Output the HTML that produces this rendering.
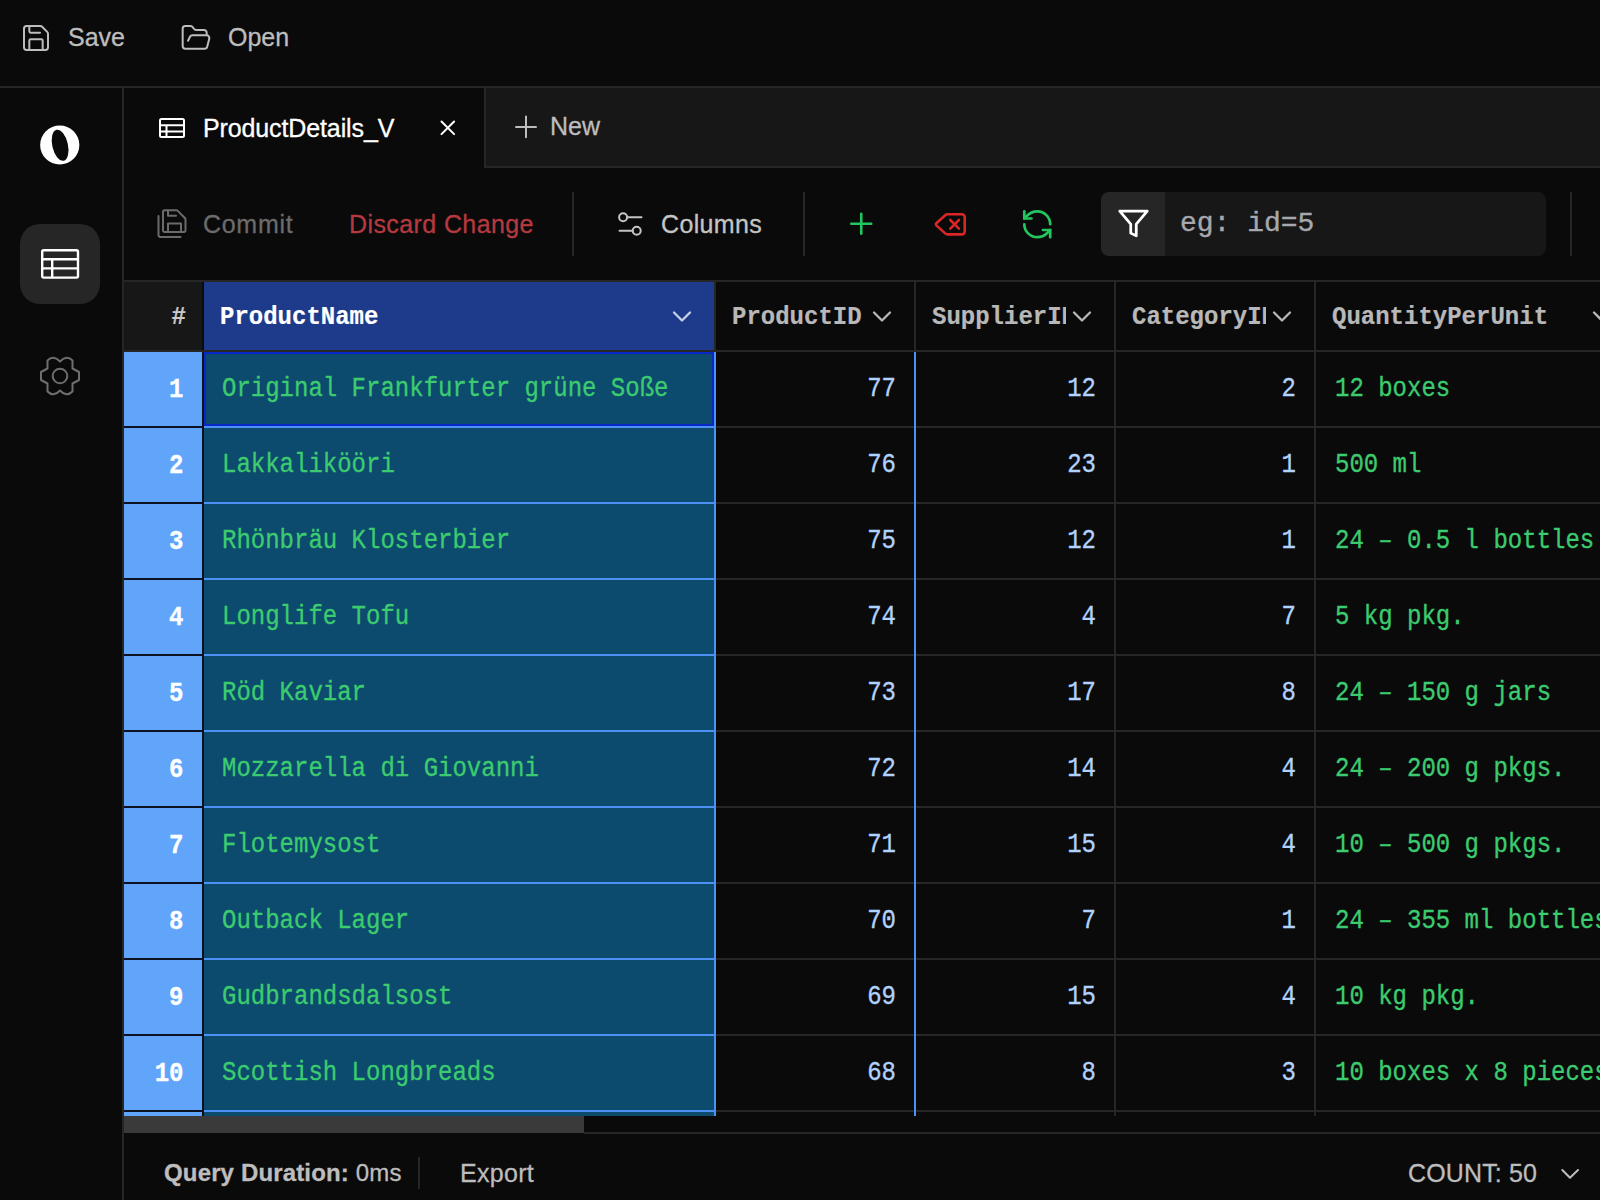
<!DOCTYPE html>
<html><head><meta charset="utf-8"><title>ProductDetails</title><style>
*{margin:0;padding:0;box-sizing:border-box}
html,body{width:1600px;height:1200px;overflow:hidden;background:#0a0a0a}
body{position:relative;font-family:"Liberation Sans",sans-serif;color:#bdbdbd}
.a{position:absolute}
.t{position:absolute;white-space:nowrap;font-size:25px;line-height:30px;height:30px;-webkit-text-stroke:0.3px currentColor}
.m{font-size:24px}
.sy{transform:scaleY(1.15);transform-origin:0 21.4px;-webkit-text-stroke:0.3px currentColor}
.sh{transform:scaleY(1.07);transform-origin:0 21.4px;-webkit-text-stroke:0.2px currentColor}
.m{font-family:"Liberation Mono",monospace}
svg{position:absolute;overflow:visible}
.hl{position:absolute;background:#262626}
</style></head><body>
<div class="hl" style="left:0;top:86px;width:1600px;height:2px"></div>
<svg style="left:20px;top:22px" width="32" height="32" viewBox="0 0 24 24" fill="none" stroke="#bdbdbd" stroke-width="1.5" stroke-linecap="round" stroke-linejoin="round"><path d="M15.2 3a2 2 0 0 1 1.4.6l3.8 3.8a2 2 0 0 1 .6 1.4V19a2 2 0 0 1-2 2H5a2 2 0 0 1-2-2V5a2 2 0 0 1 2-2z"/><path d="M17 21v-7a1 1 0 0 0-1-1H8a1 1 0 0 0-1 1v7"/><path d="M7 3v4a1 1 0 0 0 1 1h7"/></svg>
<div class="t" style="left:68px;top:22.3px;color:#bdbdbd">Save</div>
<svg style="left:179.7px;top:21.9px" width="32" height="32" viewBox="0 0 24 24" fill="none" stroke="#bdbdbd" stroke-width="1.5" stroke-linecap="round" stroke-linejoin="round"><path d="m6 14 1.5-2.9A2 2 0 0 1 9.24 10H20a2 2 0 0 1 1.94 2.5l-1.54 6a2 2 0 0 1-1.95 1.5H4a2 2 0 0 1-2-2V5a2 2 0 0 1 2-2h3.9a2 2 0 0 1 1.69.9l.81 1.2a2 2 0 0 0 1.67.9H18a2 2 0 0 1 2 2v2"/></svg>
<div class="t" style="left:228px;top:22.3px;color:#bdbdbd">Open</div>
<div class="hl" style="left:122px;top:88px;width:2px;height:1112px"></div>
<svg style="left:0;top:0" width="1" height="1"><circle cx="59.75" cy="145" r="19.6" fill="#fff"/><ellipse cx="60.1" cy="145.25" rx="7.8" ry="15.9" transform="rotate(-13 60.1 145.25)" fill="#0a0a0a"/></svg>
<div class="a" style="left:20px;top:224px;width:80px;height:80px;border-radius:20px;background:#262626"></div>
<svg style="left:0;top:0" width="1" height="1" fill="none" stroke="#fff" stroke-width="2.4"><rect x="42.2" y="250.2" width="35.8" height="27.4" rx="1.5"/><path d="M42.2 259.3H78M42.2 268.4H78M52.2 259.3V277.6"/></svg>
<svg style="left:0;top:0" width="1" height="1" fill="none" stroke="#6e6e6e" stroke-width="2" stroke-linejoin="round"><path d="M60 361.5Q53.5 354.5 47.5 360.5L47.5 368.5L41 372L41 380L47.5 383.5L47.5 391.5Q53.5 397.5 60 390.5Q66.5 397.5 72.5 391.5L72.5 383.5L79 380L79 372L72.5 368.5L72.5 360.5Q66.5 354.5 60 361.5Z"/><circle cx="60" cy="376" r="7.3"/></svg>
<div class="a" style="left:486px;top:88px;width:1114px;height:78px;background:#171717"></div>
<div class="hl" style="left:484px;top:88px;width:2px;height:80px"></div>
<div class="hl" style="left:486px;top:166px;width:1114px;height:2px"></div>
<svg style="left:0;top:0" width="1" height="1" fill="none" stroke="#fff" stroke-width="2"><rect x="160" y="119" width="24" height="18" rx="1.5"/><path d="M160 125.2H184M160 131.4H184M166.5 125.2V137"/></svg>
<div class="t" style="left:203px;top:112.5px;color:#fff;letter-spacing:-0.12px">ProductDetails_V</div>
<svg style="left:0;top:0" width="1" height="1" fill="none" stroke="#fff" stroke-width="2" stroke-linecap="round"><path d="M441.5 121.5l12.6 12.6M454.1 121.5l-12.6 12.6"/></svg>
<svg style="left:0;top:0" width="1" height="1" fill="none" stroke="#bdbdbd" stroke-width="2" stroke-linecap="round"><path d="M516 126.9h20M526 116.6v20.6"/></svg>
<div class="t" style="left:550px;top:111.3px;color:#bdbdbd">New</div>
<svg style="left:0;top:0" width="1" height="1" fill="none" stroke="#6b6b6b" stroke-width="2" stroke-linecap="round" stroke-linejoin="round"><path d="M176.5 210.2a1.5 1.5 0 0 1 1 .4l7.6 7.6a1.5 1.5 0 0 1 .4 1v11.2a1.5 1.5 0 0 1-1.5 1.5h-19.5a1.5 1.5 0 0 1-1.5-1.5v-18.7a1.5 1.5 0 0 1 1.5-1.5z"/><path d="M168 231.6v-8h13v8"/><path d="M168 210.5v5.3h8"/><path d="M158.5 216v19a2 2 0 0 0 2 2h20"/></svg>
<div class="t" style="left:203px;top:208.8px;color:#6b6b6b;letter-spacing:0.7px">Commit</div>
<div class="t" style="left:349px;top:208.8px;color:#b5393f;letter-spacing:0.4px">Discard Change</div>
<div class="hl" style="left:572px;top:192px;width:2px;height:64px"></div>
<svg style="left:0;top:0" width="1" height="1" fill="none" stroke="#c4c4c4" stroke-width="2" stroke-linecap="round"><circle cx="623.1" cy="217.3" r="4"/><path d="M627.1 217.3H641.5"/><circle cx="636.7" cy="230.8" r="4"/><path d="M619.5 230.8H632.7"/></svg>
<div class="t" style="left:661px;top:208.8px;color:#c4c4c4;letter-spacing:0.35px">Columns</div>
<div class="hl" style="left:803px;top:192px;width:2px;height:64px"></div>
<svg style="left:0;top:0" width="1" height="1" fill="none" stroke="#22c55e" stroke-width="2.6" stroke-linecap="round"><path d="M851.3 223.8H871.2M861.25 213.8V233.7"/></svg>
<svg style="left:932.5px;top:206.6px" width="34.6" height="34.6" viewBox="0 0 24 24" fill="none" stroke="#dc2626" stroke-width="1.8" stroke-linecap="round" stroke-linejoin="round"><path d="M10 5a2 2 0 0 0-1.344.519l-6.328 5.74a1 1 0 0 0 0 1.481l6.328 5.74A2 2 0 0 0 10 19h10a2 2 0 0 0 2-2V7a2 2 0 0 0-2-2z"/><path d="m12 9 6 6"/><path d="m18 9-6 6"/></svg>
<svg style="left:1019.5px;top:206.5px" width="34.5" height="34.5" viewBox="0 0 24 24" fill="none" stroke="#22c55e" stroke-width="1.9" stroke-linecap="round" stroke-linejoin="round"><path d="M21 12a9 9 0 0 0-9-9 9.75 9.75 0 0 0-6.74 2.74L3 8"/><path d="M3 3v5h5"/><path d="M3 12a9 9 0 0 0 9 9 9.75 9.75 0 0 0 6.74-2.74L21 16"/><path d="M16 16h5v5"/></svg>
<div class="a" style="left:1101px;top:192px;width:445px;height:64px;border-radius:8px;background:#171717;overflow:hidden"><div class="a" style="left:0;top:0;width:64px;height:64px;background:#262626"></div></div>
<svg style="left:1116.7px;top:207.35px" width="33" height="33" viewBox="0 0 24 24" fill="none" stroke="#fff" stroke-width="2" stroke-linecap="round" stroke-linejoin="round"><polygon points="22 3 2 3 10 12.46 10 19 14 21 14 12.46 22 3"/></svg>
<div class="t m" style="left:1180px;top:209px;font-size:28px;line-height:30px;color:#a6a8ad;-webkit-text-stroke:0.35px currentColor">eg: id=5</div>
<div class="hl" style="left:1570px;top:192px;width:2px;height:64px"></div>
<div class="hl" style="left:124px;top:280px;width:1476px;height:2px"></div>
<div class="a" style="left:124px;top:282px;width:78px;height:68px;background:#171717"></div>
<div class="t m sh" style="left:124px;top:302.5px;width:62px;text-align:right;font-weight:bold;color:#c8c8c8">#</div>
<div class="a" style="left:204px;top:282px;width:510px;height:68px;background:#1e3a8a"></div>
<div class="t m sh" style="left:220px;top:302.5px;font-weight:bold;color:#fff">ProductName</div>
<svg style="left:0;top:0" width="1" height="1" fill="none" stroke="#c8d0e8" stroke-width="2.3" stroke-linecap="round" stroke-linejoin="round"><path d="M674 312.5l8 8 8-8"/></svg>
<div class="t m sh" style="left:732px;top:302.5px;width:133.5px;overflow:hidden;font-weight:bold;color:#b8b8b8">ProductID</div>
<svg style="left:0;top:0" width="1" height="1" fill="none" stroke="#b8b8b8" stroke-width="2.3" stroke-linecap="round" stroke-linejoin="round"><path d="M874 312.5l8 8 8-8"/></svg>
<div class="t m sh" style="left:932px;top:302.5px;width:133.5px;overflow:hidden;font-weight:bold;color:#b8b8b8">SupplierID</div>
<svg style="left:0;top:0" width="1" height="1" fill="none" stroke="#b8b8b8" stroke-width="2.3" stroke-linecap="round" stroke-linejoin="round"><path d="M1074 312.5l8 8 8-8"/></svg>
<div class="t m sh" style="left:1132px;top:302.5px;width:133.5px;overflow:hidden;font-weight:bold;color:#b8b8b8">CategoryID</div>
<svg style="left:0;top:0" width="1" height="1" fill="none" stroke="#b8b8b8" stroke-width="2.3" stroke-linecap="round" stroke-linejoin="round"><path d="M1274 312.5l8 8 8-8"/></svg>
<div class="t m sh" style="left:1332px;top:302.5px;width:253.5px;overflow:hidden;font-weight:bold;color:#b8b8b8">QuantityPerUnit</div>
<svg style="left:0;top:0" width="1" height="1" fill="none" stroke="#b8b8b8" stroke-width="2.3" stroke-linecap="round" stroke-linejoin="round"><path d="M1594 312.5l8 8 8-8"/></svg>
<div class="hl" style="left:124px;top:350px;width:1476px;height:2px"></div>
<div class="hl" style="left:714px;top:282px;width:2px;height:68px"></div>
<div class="hl" style="left:914px;top:282px;width:2px;height:68px"></div>
<div class="hl" style="left:1114px;top:282px;width:2px;height:68px"></div>
<div class="hl" style="left:1314px;top:282px;width:2px;height:68px"></div>
<div class="a" style="left:124px;top:352px;width:78px;height:74px;background:#60a5fa"></div>
<div class="a" style="left:124px;top:426px;width:78px;height:2px;background:#0b1220"></div>
<div class="a" style="left:202px;top:352px;width:2px;height:76px;background:#0b1220"></div>
<div class="a" style="left:204px;top:352px;width:510px;height:74px;background:#0c4a6e"></div>
<div class="a" style="left:204px;top:426px;width:512px;height:2px;background:#4d90f6"></div>
<div class="hl" style="left:716px;top:426px;width:884px;height:2px"></div>
<div class="t m sy" style="left:222px;top:375px;color:#3ccb6e">Original Frankfurter grüne Soße</div>
<div class="t m sy" style="left:124px;top:376px;width:59.5px;text-align:right;font-weight:bold;color:#fff">1</div>
<div class="t m sy" style="left:716px;top:375px;width:180px;text-align:right;color:#b0d2fc">77</div>
<div class="t m sy" style="left:916px;top:375px;width:180px;text-align:right;color:#b0d2fc">12</div>
<div class="t m sy" style="left:1116px;top:375px;width:180px;text-align:right;color:#b0d2fc">2</div>
<div class="t m sy" style="left:1335px;top:375px;color:#3ccb6e">12 boxes</div>
<div class="a" style="left:124px;top:428px;width:78px;height:74px;background:#60a5fa"></div>
<div class="a" style="left:124px;top:502px;width:78px;height:2px;background:#0b1220"></div>
<div class="a" style="left:202px;top:428px;width:2px;height:76px;background:#0b1220"></div>
<div class="a" style="left:204px;top:428px;width:510px;height:74px;background:#0c4a6e"></div>
<div class="a" style="left:204px;top:502px;width:512px;height:2px;background:#4d90f6"></div>
<div class="hl" style="left:716px;top:502px;width:884px;height:2px"></div>
<div class="t m sy" style="left:222px;top:451px;color:#3ccb6e">Lakkalikööri</div>
<div class="t m sy" style="left:124px;top:452px;width:59.5px;text-align:right;font-weight:bold;color:#fff">2</div>
<div class="t m sy" style="left:716px;top:451px;width:180px;text-align:right;color:#b0d2fc">76</div>
<div class="t m sy" style="left:916px;top:451px;width:180px;text-align:right;color:#b0d2fc">23</div>
<div class="t m sy" style="left:1116px;top:451px;width:180px;text-align:right;color:#b0d2fc">1</div>
<div class="t m sy" style="left:1335px;top:451px;color:#3ccb6e">500 ml</div>
<div class="a" style="left:124px;top:504px;width:78px;height:74px;background:#60a5fa"></div>
<div class="a" style="left:124px;top:578px;width:78px;height:2px;background:#0b1220"></div>
<div class="a" style="left:202px;top:504px;width:2px;height:76px;background:#0b1220"></div>
<div class="a" style="left:204px;top:504px;width:510px;height:74px;background:#0c4a6e"></div>
<div class="a" style="left:204px;top:578px;width:512px;height:2px;background:#4d90f6"></div>
<div class="hl" style="left:716px;top:578px;width:884px;height:2px"></div>
<div class="t m sy" style="left:222px;top:527px;color:#3ccb6e">Rhönbräu Klosterbier</div>
<div class="t m sy" style="left:124px;top:528px;width:59.5px;text-align:right;font-weight:bold;color:#fff">3</div>
<div class="t m sy" style="left:716px;top:527px;width:180px;text-align:right;color:#b0d2fc">75</div>
<div class="t m sy" style="left:916px;top:527px;width:180px;text-align:right;color:#b0d2fc">12</div>
<div class="t m sy" style="left:1116px;top:527px;width:180px;text-align:right;color:#b0d2fc">1</div>
<div class="t m sy" style="left:1335px;top:527px;color:#3ccb6e">24 – 0.5 l bottles</div>
<div class="a" style="left:124px;top:580px;width:78px;height:74px;background:#60a5fa"></div>
<div class="a" style="left:124px;top:654px;width:78px;height:2px;background:#0b1220"></div>
<div class="a" style="left:202px;top:580px;width:2px;height:76px;background:#0b1220"></div>
<div class="a" style="left:204px;top:580px;width:510px;height:74px;background:#0c4a6e"></div>
<div class="a" style="left:204px;top:654px;width:512px;height:2px;background:#4d90f6"></div>
<div class="hl" style="left:716px;top:654px;width:884px;height:2px"></div>
<div class="t m sy" style="left:222px;top:603px;color:#3ccb6e">Longlife Tofu</div>
<div class="t m sy" style="left:124px;top:604px;width:59.5px;text-align:right;font-weight:bold;color:#fff">4</div>
<div class="t m sy" style="left:716px;top:603px;width:180px;text-align:right;color:#b0d2fc">74</div>
<div class="t m sy" style="left:916px;top:603px;width:180px;text-align:right;color:#b0d2fc">4</div>
<div class="t m sy" style="left:1116px;top:603px;width:180px;text-align:right;color:#b0d2fc">7</div>
<div class="t m sy" style="left:1335px;top:603px;color:#3ccb6e">5 kg pkg.</div>
<div class="a" style="left:124px;top:656px;width:78px;height:74px;background:#60a5fa"></div>
<div class="a" style="left:124px;top:730px;width:78px;height:2px;background:#0b1220"></div>
<div class="a" style="left:202px;top:656px;width:2px;height:76px;background:#0b1220"></div>
<div class="a" style="left:204px;top:656px;width:510px;height:74px;background:#0c4a6e"></div>
<div class="a" style="left:204px;top:730px;width:512px;height:2px;background:#4d90f6"></div>
<div class="hl" style="left:716px;top:730px;width:884px;height:2px"></div>
<div class="t m sy" style="left:222px;top:679px;color:#3ccb6e">Röd Kaviar</div>
<div class="t m sy" style="left:124px;top:680px;width:59.5px;text-align:right;font-weight:bold;color:#fff">5</div>
<div class="t m sy" style="left:716px;top:679px;width:180px;text-align:right;color:#b0d2fc">73</div>
<div class="t m sy" style="left:916px;top:679px;width:180px;text-align:right;color:#b0d2fc">17</div>
<div class="t m sy" style="left:1116px;top:679px;width:180px;text-align:right;color:#b0d2fc">8</div>
<div class="t m sy" style="left:1335px;top:679px;color:#3ccb6e">24 – 150 g jars</div>
<div class="a" style="left:124px;top:732px;width:78px;height:74px;background:#60a5fa"></div>
<div class="a" style="left:124px;top:806px;width:78px;height:2px;background:#0b1220"></div>
<div class="a" style="left:202px;top:732px;width:2px;height:76px;background:#0b1220"></div>
<div class="a" style="left:204px;top:732px;width:510px;height:74px;background:#0c4a6e"></div>
<div class="a" style="left:204px;top:806px;width:512px;height:2px;background:#4d90f6"></div>
<div class="hl" style="left:716px;top:806px;width:884px;height:2px"></div>
<div class="t m sy" style="left:222px;top:755px;color:#3ccb6e">Mozzarella di Giovanni</div>
<div class="t m sy" style="left:124px;top:756px;width:59.5px;text-align:right;font-weight:bold;color:#fff">6</div>
<div class="t m sy" style="left:716px;top:755px;width:180px;text-align:right;color:#b0d2fc">72</div>
<div class="t m sy" style="left:916px;top:755px;width:180px;text-align:right;color:#b0d2fc">14</div>
<div class="t m sy" style="left:1116px;top:755px;width:180px;text-align:right;color:#b0d2fc">4</div>
<div class="t m sy" style="left:1335px;top:755px;color:#3ccb6e">24 – 200 g pkgs.</div>
<div class="a" style="left:124px;top:808px;width:78px;height:74px;background:#60a5fa"></div>
<div class="a" style="left:124px;top:882px;width:78px;height:2px;background:#0b1220"></div>
<div class="a" style="left:202px;top:808px;width:2px;height:76px;background:#0b1220"></div>
<div class="a" style="left:204px;top:808px;width:510px;height:74px;background:#0c4a6e"></div>
<div class="a" style="left:204px;top:882px;width:512px;height:2px;background:#4d90f6"></div>
<div class="hl" style="left:716px;top:882px;width:884px;height:2px"></div>
<div class="t m sy" style="left:222px;top:831px;color:#3ccb6e">Flotemysost</div>
<div class="t m sy" style="left:124px;top:832px;width:59.5px;text-align:right;font-weight:bold;color:#fff">7</div>
<div class="t m sy" style="left:716px;top:831px;width:180px;text-align:right;color:#b0d2fc">71</div>
<div class="t m sy" style="left:916px;top:831px;width:180px;text-align:right;color:#b0d2fc">15</div>
<div class="t m sy" style="left:1116px;top:831px;width:180px;text-align:right;color:#b0d2fc">4</div>
<div class="t m sy" style="left:1335px;top:831px;color:#3ccb6e">10 – 500 g pkgs.</div>
<div class="a" style="left:124px;top:884px;width:78px;height:74px;background:#60a5fa"></div>
<div class="a" style="left:124px;top:958px;width:78px;height:2px;background:#0b1220"></div>
<div class="a" style="left:202px;top:884px;width:2px;height:76px;background:#0b1220"></div>
<div class="a" style="left:204px;top:884px;width:510px;height:74px;background:#0c4a6e"></div>
<div class="a" style="left:204px;top:958px;width:512px;height:2px;background:#4d90f6"></div>
<div class="hl" style="left:716px;top:958px;width:884px;height:2px"></div>
<div class="t m sy" style="left:222px;top:907px;color:#3ccb6e">Outback Lager</div>
<div class="t m sy" style="left:124px;top:908px;width:59.5px;text-align:right;font-weight:bold;color:#fff">8</div>
<div class="t m sy" style="left:716px;top:907px;width:180px;text-align:right;color:#b0d2fc">70</div>
<div class="t m sy" style="left:916px;top:907px;width:180px;text-align:right;color:#b0d2fc">7</div>
<div class="t m sy" style="left:1116px;top:907px;width:180px;text-align:right;color:#b0d2fc">1</div>
<div class="t m sy" style="left:1335px;top:907px;color:#3ccb6e">24 – 355 ml bottles</div>
<div class="a" style="left:124px;top:960px;width:78px;height:74px;background:#60a5fa"></div>
<div class="a" style="left:124px;top:1034px;width:78px;height:2px;background:#0b1220"></div>
<div class="a" style="left:202px;top:960px;width:2px;height:76px;background:#0b1220"></div>
<div class="a" style="left:204px;top:960px;width:510px;height:74px;background:#0c4a6e"></div>
<div class="a" style="left:204px;top:1034px;width:512px;height:2px;background:#4d90f6"></div>
<div class="hl" style="left:716px;top:1034px;width:884px;height:2px"></div>
<div class="t m sy" style="left:222px;top:983px;color:#3ccb6e">Gudbrandsdalsost</div>
<div class="t m sy" style="left:124px;top:984px;width:59.5px;text-align:right;font-weight:bold;color:#fff">9</div>
<div class="t m sy" style="left:716px;top:983px;width:180px;text-align:right;color:#b0d2fc">69</div>
<div class="t m sy" style="left:916px;top:983px;width:180px;text-align:right;color:#b0d2fc">15</div>
<div class="t m sy" style="left:1116px;top:983px;width:180px;text-align:right;color:#b0d2fc">4</div>
<div class="t m sy" style="left:1335px;top:983px;color:#3ccb6e">10 kg pkg.</div>
<div class="a" style="left:124px;top:1036px;width:78px;height:74px;background:#60a5fa"></div>
<div class="a" style="left:124px;top:1110px;width:78px;height:2px;background:#0b1220"></div>
<div class="a" style="left:202px;top:1036px;width:2px;height:76px;background:#0b1220"></div>
<div class="a" style="left:204px;top:1036px;width:510px;height:74px;background:#0c4a6e"></div>
<div class="a" style="left:204px;top:1110px;width:512px;height:2px;background:#4d90f6"></div>
<div class="hl" style="left:716px;top:1110px;width:884px;height:2px"></div>
<div class="t m sy" style="left:222px;top:1059px;color:#3ccb6e">Scottish Longbreads</div>
<div class="t m sy" style="left:124px;top:1060px;width:59.5px;text-align:right;font-weight:bold;color:#fff">10</div>
<div class="t m sy" style="left:716px;top:1059px;width:180px;text-align:right;color:#b0d2fc">68</div>
<div class="t m sy" style="left:916px;top:1059px;width:180px;text-align:right;color:#b0d2fc">8</div>
<div class="t m sy" style="left:1116px;top:1059px;width:180px;text-align:right;color:#b0d2fc">3</div>
<div class="t m sy" style="left:1335px;top:1059px;color:#3ccb6e">10 boxes x 8 pieces</div>
<div class="a" style="left:124px;top:1112px;width:78px;height:4px;background:#60a5fa"></div>
<div class="a" style="left:204px;top:1112px;width:510px;height:4px;background:#0c4a6e"></div>
<div class="a" style="left:204px;top:352px;width:510px;height:74px;border:2px solid #0828c8"></div>
<div class="a" style="left:714px;top:352px;width:2px;height:765px;background:#4d90f6"></div>
<div class="a" style="left:914px;top:352px;width:2px;height:765px;background:#4d90f6"></div>
<div class="hl" style="left:1114px;top:352px;width:2px;height:765px"></div>
<div class="hl" style="left:1314px;top:352px;width:2px;height:765px"></div>
<div class="a" style="left:124px;top:1116px;width:1476px;height:16px;background:#0a0a0a"></div>
<div class="a" style="left:124px;top:1116px;width:460px;height:17px;background:#3a3a3a"></div>
<div class="hl" style="left:584px;top:1132px;width:1016px;height:2px"></div>
<div class="t" style="left:164px;top:1158px;font-size:24px;color:#bdbdbd;letter-spacing:0.15px"><b>Query Duration:</b> 0ms</div>
<div class="hl" style="left:418px;top:1157px;width:2px;height:32px"></div>
<div class="t" style="left:460px;top:1158px;color:#bdbdbd;letter-spacing:0.3px">Export</div>
<div class="t" style="left:1408px;top:1158px;color:#bdbdbd;letter-spacing:0.15px">COUNT: 50</div>
<svg style="left:0;top:0" width="1" height="1" fill="none" stroke="#bdbdbd" stroke-width="2" stroke-linecap="round" stroke-linejoin="round"><path d="M1562.3 1170l7.7 7.7 8-7.7"/></svg>
</body></html>
